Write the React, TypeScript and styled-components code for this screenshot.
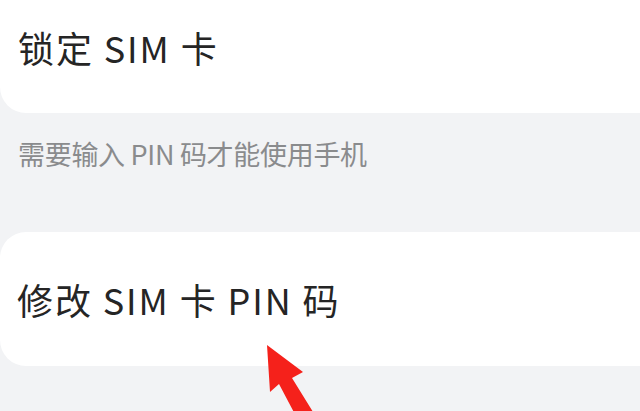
import styled, { createGlobalStyle } from 'styled-components';

const GlobalStyle = createGlobalStyle`
  html, body {
    margin: 0;
    padding: 0;
    background: #f2f3f5;
  }
  body {
    font-family: "Noto Sans CJK SC", "Noto Sans", sans-serif;
  }
`;

const Page = styled.div`
  position: relative;
  width: 640px;
  height: 411px;
  overflow: hidden;
  background: #f2f3f5;
`;

const Card = styled.div<{ $top?: boolean }>`
  display: flex;
  align-items: center;
  height: ${({ $top }) => ($top ? '113px' : '134px')};
  padding: ${({ $top }) => ($top ? '0 0 20px 18px' : '0 0 0 17px')};
  box-sizing: border-box;
  background: #ffffff;
  border-radius: ${({ $top }) => ($top ? '0 0 0 26px' : '26px 0 0 26px')};
`;

const Title = styled.span`
  font-size: 36px;
  color: #252525;
  letter-spacing: 1.9px;
`;

const Hint = styled.div`
  height: 119px;
  padding: 21px 0 0 18px;
  box-sizing: border-box;
  font-size: 27px;
  letter-spacing: -0.3px;
  color: #8a8b8d;
`;

const Arrow = styled.svg`
  position: absolute;
  left: 0;
  top: 0;
  pointer-events: none;
`;

export default function App() {
  return (
    <>
      <GlobalStyle />
      <Page>
        <Card $top>
          <Title>锁定 SIM 卡</Title>
        </Card>
        <Hint>需要输入 PIN 码才能使用手机</Hint>
        <Card>
          <Title>修改 SIM 卡 PIN 码</Title>
        </Card>
        <Arrow width="640" height="411" viewBox="0 0 640 411">
          <polygon
            points="267,345 303,372 292,378 318,420 298,420 279,384 270,392"
            fill="#f5211b"
          />
        </Arrow>
      </Page>
    </>
  );
}
